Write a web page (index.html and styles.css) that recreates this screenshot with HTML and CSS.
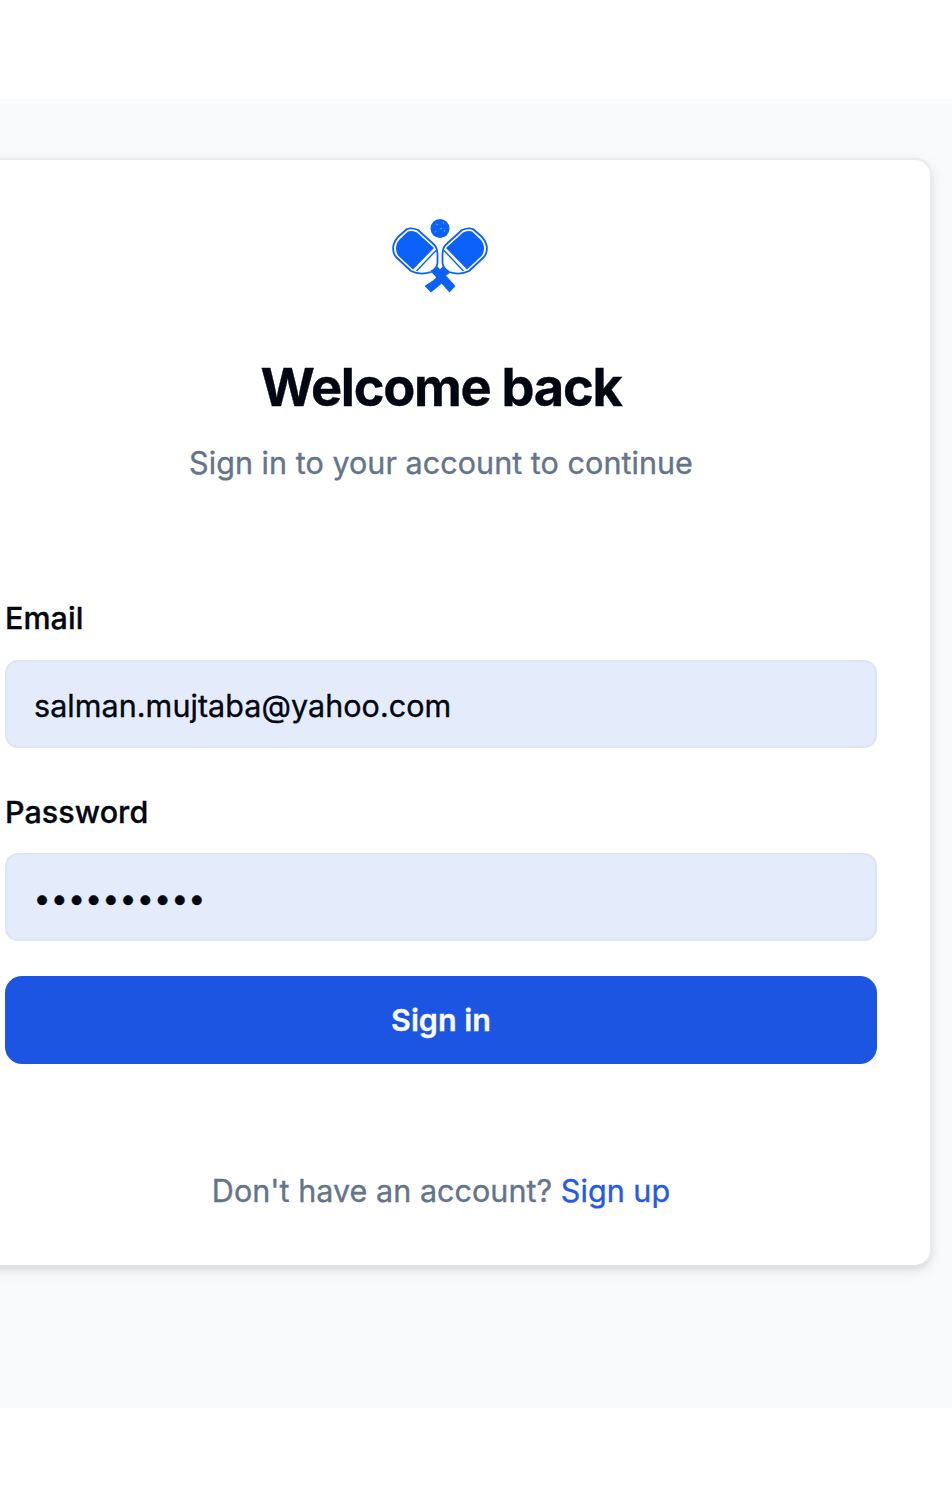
FILE: index.html
```html
<!DOCTYPE html>
<html lang="en">
<head>
<meta charset="utf-8">
<title>Sign in</title>
<link rel="stylesheet" href="styles.css">
</head>
<body>
<main class="page">
  <section class="card">
    <header class="header">
      <svg class="logo" viewBox="0 0 120 90" aria-hidden="true">
        <g fill="none" stroke="#0b61fa" stroke-linejoin="round">
          <path stroke-width="1.8" d="M27 19Q32 17.500 38 20L54 34.500Q57 37 57.500 44V53Q57 58 51 62Q40 65.500 31 61L16 47Q12 42 13.500 35Q15 30 18 27Z"/>
          <path stroke-width="1.8" d="M93 19Q88 17.500 82 20L66 34.500Q63 37 62.500 44V53Q63 58 69 62Q80 65.500 89 61L104 47Q108 42 106.500 35Q105 30 102 27Z"/>
        </g>
        <g fill="#0b61fa">
          <path d="M28 21.500Q33 20 37 22.500L54 38L33 59.500L18 45.500Q15 41 16.500 35Q17 32 19.500 29.500Z"/>
          <path d="M92 21.500Q87 20 83 22.500L66 38L87 59.500L102 45.500Q105 41 103.500 35Q103 32 100.500 29.500Z"/>
          <path d="M50.500 61L57.500 56.500L75.500 76L69.500 82.500Z"/>
          <path d="M70.500 62.500L62.500 56.500L58.500 61L64 67Z"/>
          <path d="M53 70.500L57.500 66.500L63 72.500L51 82.500L44.500 76Z"/>
          <circle cx="60" cy="18.500" r="9.500"/>
        </g>
        <path d="M56 40.500L36.500 61M64 40.500L83.500 61" stroke="#0b61fa" stroke-width="1.400"/>
        <path d="M56 14l2 1M63 12l1 2M60 19l2-1M55 21l1 1M65 20l-1 2" stroke="#5c97ff" stroke-width="1.200"/>
      </svg>
      <h1 class="title">Welcome back</h1>
      <p class="subtitle">Sign in to your account to continue</p>
    </header>
    <form class="form">
      <label class="label" for="email">Email</label>
      <input class="input" id="email" type="text" value="salman.mujtaba@yahoo.com">
      <label class="label label-next" for="password">Password</label>
      <div class="input dots" id="password">••••••••••</div>
      <button class="submit" type="button">Sign in</button>
    </form>
    <p class="footer">Don't have an account? <a class="link">Sign up</a></p>
  </section>
</main>
</body>
</html>
```
FILE: styles.css
```css
* { box-sizing: border-box; }
body {
  margin: 0;
  height: 1508px;
  padding-top: 99px;
  overflow: hidden;
  background: #fff;
  color: #030712;
  font-family: Inter, sans-serif;
  font-size: 30.5px;
  letter-spacing: .05px;
  line-height: 44px;
  -webkit-text-stroke: .35px currentColor;
}
.page {
  height: 1309px;
  padding-top: 59px;
  background: #f8fafc;
}
.card {
  width: 982px;
  height: 1109px;
  margin-left: -50px;
  padding: 51px 53px 0;
  border: 2px solid #e8ebef;
  border-bottom-color: #e0e2e5;
  border-radius: 17px;
  background: #fff;
  box-shadow: 0 4px 13px rgba(0, 0, 0, .09), 0 2px 4px rgba(0, 0, 0, .05);
}
.header { text-align: center; }
.logo {
  display: block;
  width: 120px;
  height: 90px;
  margin: -1px 0 0 375px;
}
.title {
  margin: 55px 0 0;
  font-size: 52.4px;
  line-height: 64px;
  font-weight: 700;
  letter-spacing: -1.3px;
}
.subtitle {
  margin: 22px 0 0;
  color: #64748b;
}
.form {
  display: flex;
  flex-direction: column;
  margin-top: 111px;
}
.label {
  font-weight: 500;
}
.label-next { margin-top: 42px; }
.input {
  width: 100%;
  height: 88px;
  margin: 19px 0 0;
  padding: 3px 27px 0;
  border: 2px solid #dde5f1;
  border-radius: 13px;
  background: #e4ecfb;
  color: #030712;
  font: inherit;
  letter-spacing: inherit;
  outline: 0;
}
#email { margin-top: 20px; }
.dots {
  padding: 0 26.5px;
  line-height: 85px;
}
.submit {
  height: 88px;
  margin-top: 35px;
  padding: 0;
  border: 0;
  border-radius: 17px;
  background: #1d55e3;
  color: #f8fafc;
  font: 600 30.5px/88px Inter, sans-serif;
}
.footer {
  margin: 105px 0 0;
  color: #64748b;
  text-align: center;
}
.link { color: #2459eb; }
```
